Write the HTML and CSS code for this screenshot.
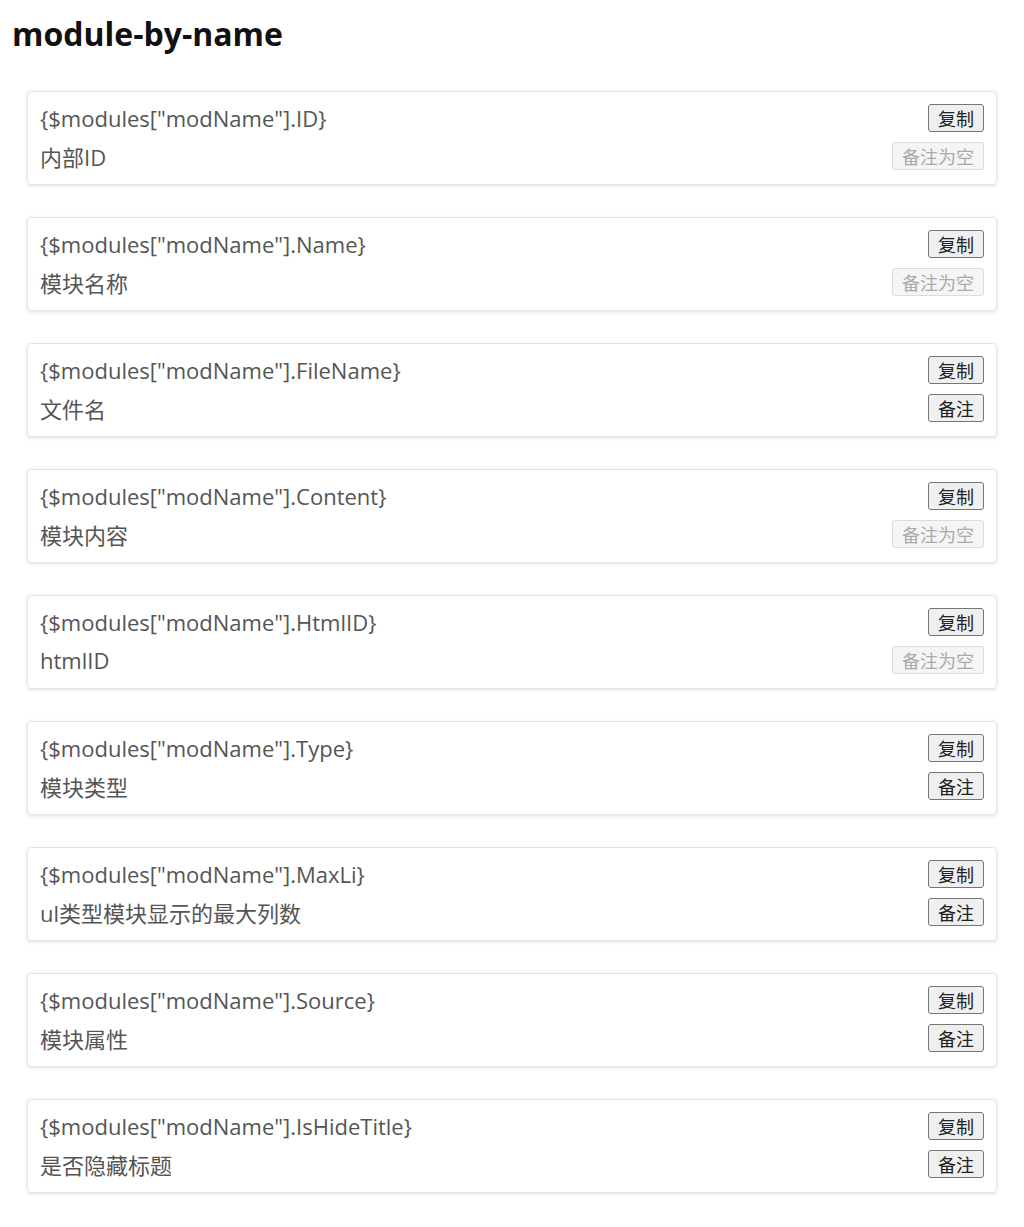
FILE: index.html
```html
<!DOCTYPE html>
<html lang="zh">
<head>
    <meta charset="UTF-8">
    <meta name="viewport" content="width=device-width, initial-scale=1.0">
    <title>module-by-name</title>
    <link rel="stylesheet" href="styles.css">
</head>
<body>

    <h2 class="title">module-by-name</h2>

    <div class="list">
        <div class="item">
            <div class="row">
                <span class="code">{$modules["modName"].ID}</span>
                <button class="btn">复制</button>
            </div>
            <div class="row">
                <span class="note">内部ID</span>
                <button class="btn" disabled>备注为空</button>
            </div>
        </div>

        <div class="item">
            <div class="row">
                <span class="code">{$modules["modName"].Name}</span>
                <button class="btn">复制</button>
            </div>
            <div class="row">
                <span class="note">模块名称</span>
                <button class="btn" disabled>备注为空</button>
            </div>
        </div>

        <div class="item">
            <div class="row">
                <span class="code">{$modules["modName"].FileName}</span>
                <button class="btn">复制</button>
            </div>
            <div class="row">
                <span class="note">文件名</span>
                <button class="btn">备注</button>
            </div>
        </div>

        <div class="item">
            <div class="row">
                <span class="code">{$modules["modName"].Content}</span>
                <button class="btn">复制</button>
            </div>
            <div class="row">
                <span class="note">模块内容</span>
                <button class="btn" disabled>备注为空</button>
            </div>
        </div>

        <div class="item">
            <div class="row">
                <span class="code">{$modules["modName"].HtmlID}</span>
                <button class="btn">复制</button>
            </div>
            <div class="row">
                <span class="note">htmlID</span>
                <button class="btn" disabled>备注为空</button>
            </div>
        </div>

        <div class="item">
            <div class="row">
                <span class="code">{$modules["modName"].Type}</span>
                <button class="btn">复制</button>
            </div>
            <div class="row">
                <span class="note">模块类型</span>
                <button class="btn">备注</button>
            </div>
        </div>

        <div class="item">
            <div class="row">
                <span class="code">{$modules["modName"].MaxLi}</span>
                <button class="btn">复制</button>
            </div>
            <div class="row">
                <span class="note">ul类型模块显示的最大列数</span>
                <button class="btn">备注</button>
            </div>
        </div>

        <div class="item">
            <div class="row">
                <span class="code">{$modules["modName"].Source}</span>
                <button class="btn">复制</button>
            </div>
            <div class="row">
                <span class="note">模块属性</span>
                <button class="btn">备注</button>
            </div>
        </div>

        <div class="item">
            <div class="row">
                <span class="code">{$modules["modName"].IsHideTitle}</span>
                <button class="btn">复制</button>
            </div>
            <div class="row">
                <span class="note">是否隐藏标题</span>
                <button class="btn">备注</button>
            </div>
        </div>
    </div>

</body>
</html>
```

FILE: styles.css
```css
* {
    margin: 0;
    padding: 0;
    box-sizing: border-box;
}
body {
    background: white;
    font-family: "Open Sans", "Noto Sans CJK SC", sans-serif;
    color: #555;
    padding: 13px 12px;
}
.title {
    font-size: 32px;
    font-weight: bold;
    color: #111;
    line-height: 42px;
    margin-bottom: 36px;
}
.list {
    margin: 0 15px;
    display: flex;
    flex-direction: column;
    gap: 32px;
}
.item {
    background: white;
    border: 1px solid #e4e4e4;
    border-radius: 4px;
    box-shadow: 0 1px 4px rgba(0, 0, 0, 0.12);
    padding: 12px 12px 14px 12px;
    display: flex;
    flex-direction: column;
    gap: 10px;
}
.row {
    display: flex;
    justify-content: space-between;
    align-items: center;
    height: 28px;
}
.code, .note {
    font-size: 22px;
    color: #555;
}
.btn {
    font-family: "Noto Sans CJK SC", sans-serif;
    font-size: 18px;
    height: 28px;
    padding: 0 9px;
    color: #222;
    background: #efefef;
    border: 1px solid #767676;
    border-radius: 3px;
}
.btn:disabled {
    color: #aaa;
    background: #f5f5f5;
    border-color: #ddd;
}
```
